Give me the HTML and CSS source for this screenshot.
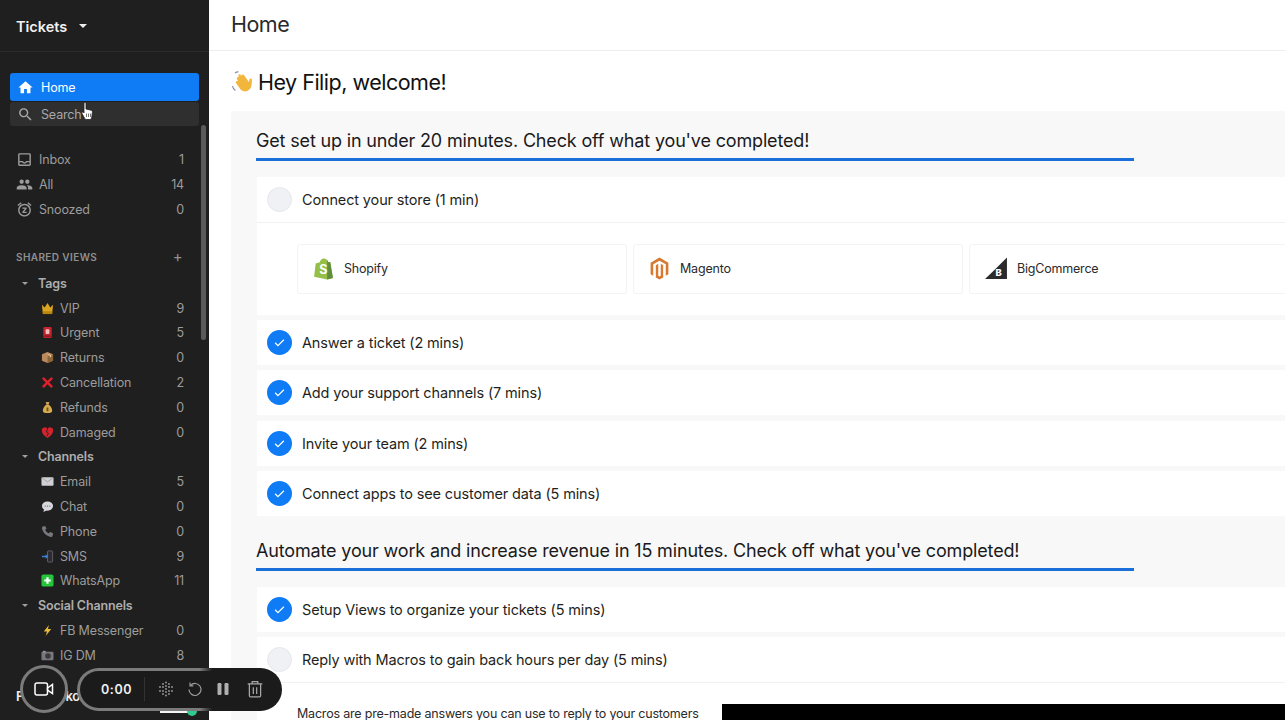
FILE: index.html
```html
<!DOCTYPE html>
<html lang="en">
<head>
    <meta charset="UTF-8">
    <title>Tickets - Home</title>
    <link rel="stylesheet" href="styles.css">
</head>
<body>
    <!-- Icon sprites -->
    <svg class="sprites" width="0" height="0">
        <symbol id="i-home" viewBox="0 0 24 24"><path d="M10 20v-6h4v6h5v-8h3L12 3 2 12h3v8z"/></symbol>
        <symbol id="i-search" viewBox="0 0 24 24"><path d="M15.5 14h-.79l-.28-.27C15.41 12.59 16 11.11 16 9.5 16 5.91 13.09 3 9.5 3S3 5.91 3 9.5 5.91 16 9.5 16c1.61 0 3.09-.59 4.23-1.57l.27.28v.79l5 4.99L20.49 19l-4.99-5zm-6 0C7.01 14 5 11.99 5 9.5S7.01 5 9.5 5 14 7.01 14 9.5 11.99 14 9.5 14z"/></symbol>
        <symbol id="i-inbox" viewBox="0 0 24 24"><path d="M19 3H5c-1.1 0-2 .9-2 2v14c0 1.1.9 2 2 2h14c1.1 0 2-.9 2-2V5c0-1.1-.9-2-2-2zm0 16H5v-3h3.56c.69 1.19 1.97 2 3.45 2s2.75-.81 3.45-2H19v3zm0-5h-4.99c0 1.1-.9 2-2 2s-2-.9-2-2H5V5h14v9z"/></symbol>
        <symbol id="i-people" viewBox="0 0 24 24"><path d="M16 11c1.66 0 2.99-1.34 2.99-3S17.66 5 16 5c-1.66 0-3 1.34-3 3s1.34 3 3 3zm-8 0c1.66 0 2.99-1.34 2.99-3S9.66 5 8 5C6.34 5 5 6.34 5 8s1.34 3 3 3zm0 2c-2.33 0-7 1.17-7 3.5V19h14v-2.5c0-2.33-4.67-3.5-7-3.5zm8 0c-.29 0-.62.02-.97.05 1.16.84 1.97 1.97 1.97 3.45V19h6v-2.5c0-2.33-4.67-3.5-7-3.5z"/></symbol>
        <symbol id="i-snooze" viewBox="0 0 24 24"><path d="M9 11h3.63L9 15.2V17h6v-2h-3.63L15 10.8V9H9v2zm7.056-7.654l1.282-1.535 4.607 3.85-1.28 1.54zM3.336 7.19l-1.28-1.54 4.61-3.85 1.28 1.54zM12 6c3.86 0 7 3.14 7 7s-3.14 7-7 7-7-3.14-7-7 3.14-7 7-7m0-2c-4.97 0-9 4.03-9 9s4.03 9 9 9 9-4.03 9-9-4.03-9-9-9z"/></symbol>
        <symbol id="i-check" viewBox="0 0 24 24"><path d="M5 12.500l4.500 4.500L19 7.500" fill="none" stroke="#fff" stroke-width="2"/></symbol>
    </svg>

    <div class="app">
        <!-- Sidebar -->
        <aside class="sidebar">
            <div class="side-head">
                <span>Tickets</span>
                <i class="caret-big"></i>
            </div>

            <div class="side-scroll">
                <div class="side-nav">
                    <div class="nav-item nav-active"><svg class="ico"><use href="#i-home"/></svg>Home</div>
                    <div class="nav-item nav-search"><svg class="ico"><use href="#i-search"/></svg>Search</div>
                </div>

                <div class="views">
                    <div class="row"><svg class="ico"><use href="#i-inbox"/></svg><span class="name">Inbox</span><span class="num">1</span></div>
                    <div class="row"><svg class="ico"><use href="#i-people"/></svg><span class="name">All</span><span class="num">14</span></div>
                    <div class="row"><svg class="ico"><use href="#i-snooze"/></svg><span class="name">Snoozed</span><span class="num">0</span></div>
                </div>

                <div class="shared-title"><span>SHARED VIEWS</span><span class="plus">+</span></div>

                <div class="group"><i class="caret"></i>Tags</div>
                <div class="row sub">
                    <svg class="emo" viewBox="0 0 14 14"><path d="M1 3l3 3 3-5 3 5 3-3-1 10H2z" fill="#d9a520"/><path d="M2 10h10v3H2z" fill="#b8860b"/></svg>
                    <span class="name">VIP</span><span class="num">9</span>
                </div>
                <div class="row sub">
                    <svg class="emo" viewBox="0 0 14 14"><rect x="2.5" y="1" width="9" height="12" rx="1.5" fill="#c8242f"/><rect x="5" y="3.5" width="4" height="5" rx="1" fill="#f3c0c0"/><rect x="3.5" y="10" width="7" height="2" fill="#8f1a22"/></svg>
                    <span class="name">Urgent</span><span class="num">5</span>
                </div>
                <div class="row sub">
                    <svg class="emo" viewBox="0 0 14 14"><path d="M7 1l6 2.5v7L7 13l-6-2.5v-7z" fill="#b98a5e"/><path d="M7 6v7l6-2.5v-7z" fill="#8c6239"/><path d="M5 2l6 2.5v2L9.5 7V5z" fill="#e2c49c"/></svg>
                    <span class="name">Returns</span><span class="num">0</span>
                </div>
                <div class="row sub">
                    <svg class="emo" viewBox="0 0 14 14"><path d="M2 2l10 10M12 2L2 12" stroke="#e0212b" stroke-width="2.6" fill="none"/></svg>
                    <span class="name">Cancellation</span><span class="num">2</span>
                </div>
                <div class="row sub">
                    <svg class="emo" viewBox="0 0 14 14"><path d="M5 1h4L8.2 4h-2.4z" fill="#c9a25a"/><path d="M5.5 4h3C11 6 12 8.5 12 10.5 12 12.5 10.5 13 7 13s-5-.5-5-2.500C2 8.500 3 6 5.500 4z" fill="#d8ab4c"/><rect x="6" y="7" width="2" height="4" fill="#6d5320"/></svg>
                    <span class="name">Refunds</span><span class="num">0</span>
                </div>
                <div class="row sub">
                    <svg class="emo" viewBox="0 0 14 14"><path d="M7 13C3 10 1 8 1 5a3 3 0 0 1 6-1 3 3 0 0 1 6 1c0 3-2 5-6 8z" fill="#d3232f"/><path d="M7 3.500L5.800 6.500 8 8 6.300 11" stroke="#1f1f1f" stroke-width=".9" fill="none"/></svg>
                    <span class="name">Damaged</span><span class="num">0</span>
                </div>

                <div class="group"><i class="caret"></i>Channels</div>
                <div class="row sub">
                    <svg class="emo" viewBox="0 0 14 14"><rect x="0.500" y="2.500" width="13" height="9" rx="1" fill="#cfcfd4"/><path d="M1 3l6 4.500L13 3" stroke="#8d8d92" stroke-width=".7" fill="none"/></svg>
                    <span class="name">Email</span><span class="num">5</span>
                </div>
                <div class="row sub">
                    <svg class="emo" viewBox="0 0 14 14"><ellipse cx="7" cy="6.500" rx="6" ry="5" fill="#d8d8dc"/><path d="M3.500 10l-1 3 4-2z" fill="#d8d8dc"/><circle cx="4.500" cy="6.500" r=".7" fill="#666"/><circle cx="7" cy="6.500" r=".7" fill="#666"/><circle cx="9.500" cy="6.500" r=".7" fill="#666"/></svg>
                    <span class="name">Chat</span><span class="num">0</span>
                </div>
                <div class="row sub">
                    <svg class="emo" viewBox="0 0 14 14"><path d="M2 1.500l2.500-.5 1.500 3-1.500 1.200c.6 1.700 2 3.100 3.800 3.800L10 7.500l3 1.500-.5 2.500c-.3 1-1 1.500-2 1.300C5.700 12 2 8.300 1 3.500c-.1-.9.300-1.600 1-2z" fill="#77777c"/></svg>
                    <span class="name">Phone</span><span class="num">0</span>
                </div>
                <div class="row sub">
                    <svg class="emo" viewBox="0 0 14 14"><rect x="7" y="1" width="5.500" height="12" rx="1" fill="#2b2b30" stroke="#8a8a90" stroke-width=".6"/><path d="M1 7h6" stroke="#3f7fd6" stroke-width="1.600"/><path d="M5 4.500L8 7l-3 2.500z" fill="#3f7fd6"/></svg>
                    <span class="name">SMS</span><span class="num">9</span>
                </div>
                <div class="row sub">
                    <svg class="emo" viewBox="0 0 14 14"><rect x="0.500" y="0.500" width="13" height="13" rx="2" fill="#25c53a"/><path d="M7 3.500v7M3.500 7h7" stroke="#fff" stroke-width="2.400"/></svg>
                    <span class="name">WhatsApp</span><span class="num">11</span>
                </div>

                <div class="group"><i class="caret"></i>Social Channels</div>
                <div class="row sub">
                    <svg class="emo" viewBox="0 0 14 14"><path d="M8.500 1L3 8h3.500L5 13l6-7.500H7.500z" fill="#e9b93a"/></svg>
                    <span class="name">FB Messenger</span><span class="num">0</span>
                </div>
                <div class="row sub">
                    <svg class="emo" viewBox="0 0 14 14"><rect x="0.500" y="3" width="13" height="9" rx="1" fill="#77777c"/><rect x="2" y="2" width="3" height="1.500" fill="#9a9a9f"/><circle cx="7.500" cy="7.500" r="3" fill="#3a3a3e"/></svg>
                    <span class="name">IG DM</span><span class="num">8</span>
                </div>
            </div>

            <div class="side-foot">
                <span class="user">Filip Markov</span>
                <i class="toggle"></i>
                <i class="status"></i>
            </div>

            <div class="side-bar"></div>
        </aside>

        <!-- Main content -->
        <main class="main">
            <header class="main-head">Home</header>

            <h1 class="welcome">
                <svg class="wave" viewBox="0 0 24 24">
                    <path d="M6 9c-1-1.500 1-2.700 2-1.500L7.500 6c-.8-1.500 1.300-2.500 2.200-1.200l1 1.500c-.5-1.500 1.500-2.500 2.400-1l4.800 6.700.5-2.500c.3-1.500 2.500-1.300 2.500.3 0 4-.2 7-2 9.200-2.800 3.300-7 3-9.500.3L5 13c-1-1.300.6-2.800 2-1.700z" fill="#f2b63c"/>
                    <path d="M1.500 16c.3 2 1.300 3.500 3 4.500M4 3c1-.8 2.200-1.200 3.500-1" stroke="#8a8ab0" stroke-width="1.200" fill="none"/>
                </svg>
                Hey Filip, welcome!
            </h1>

            <section class="panel">
                <h2 class="panel-title">Get set up in under 20 minutes. Check off what you've completed!</h2>

                <div class="card">
                    <div class="task task-open"><i class="circle"></i>Connect your store (1 min)</div>
                    <div class="stores">
                        <div class="store">
                            <svg class="logo" viewBox="0 0 20 22"><path d="M13 2.500L11 1.500C9 1 7 2.500 6.500 5L2.500 6.300 1 19l12.500 2.500L19 20 16.500 5l-2-.2z" fill="#95bf47"/><path d="M13.500 21.500L19 20 16.500 5l-2-.2-1-2.300z" fill="#5e8e3e"/><text x="6" y="16" class="logo-s">S</text></svg>
                            Shopify
                        </div>
                        <div class="store">
                            <svg class="logo" viewBox="0 0 20 22"><path d="M10 .500L1.500 5.500v11l2.500 1.500V7l6-3.500L16 7v11l2.500-1.500v-11z" fill="#d9782f"/><path d="M8.800 6.500L6.500 8v11.500L10 21.500l3.500-2V8l-2.300-1.500V18L10 18.700 8.800 18z" fill="#d9782f"/></svg>
                            Magento
                        </div>
                        <div class="store">
                            <svg class="logo logo-wide" viewBox="0 0 22 22"><path d="M21 .500V21H0L9 12.500z" fill="#2b2b2f"/><text x="10" y="18" class="logo-b">B</text></svg>
                            BigCommerce
                        </div>
                    </div>
                </div>

                <div class="task task-done"><i class="circle on"><svg><use href="#i-check"/></svg></i>Answer a ticket (2 mins)</div>
                <div class="task task-done"><i class="circle on"><svg><use href="#i-check"/></svg></i>Add your support channels (7 mins)</div>
                <div class="task task-done"><i class="circle on"><svg><use href="#i-check"/></svg></i>Invite your team (2 mins)</div>
                <div class="task task-done"><i class="circle on"><svg><use href="#i-check"/></svg></i>Connect apps to see customer data (5 mins)</div>

                <h2 class="panel-title second">Automate your work and increase revenue in 15 minutes. Check off what you've completed!</h2>

                <div class="task task-done"><i class="circle on"><svg><use href="#i-check"/></svg></i>Setup Views to organize your tickets (5 mins)</div>
                <div class="card">
                    <div class="task task-open"><i class="circle"></i>Reply with Macros to gain back hours per day (5 mins)</div>
                    <div class="macros">
                        <p>Macros are pre-made answers you can use to reply to your customers</p>
                        <div class="video"></div>
                    </div>
                </div>
            </section>
        </main>
    </div>

    <!-- Mouse pointer in the recording -->
    <svg class="pointer" viewBox="0 0 12 18">
        <path d="M3 1.500c0-1.300 2-1.300 2 0V7l5 1.200c1 .3 1.500 1 1.400 2L10.800 15c-.2 1-.8 2.500-2 2.500H5.500c-.8 0-1.400-.4-1.800-1L1 11.500c-.7-1.200.8-2.200 1.600-1.200L3 11z" fill="#fff" stroke="#222" stroke-width=".8"/>
        <path d="M5.500 11.500v3.500M7.500 11.500v3.500M9.500 11.500v3.500" stroke="#555" stroke-width=".8"/>
    </svg>

    <!-- Screen recorder toolbar -->
    <div class="rec">
        <div class="rec-cam">
            <svg width="20" height="16" viewBox="0 0 20 16"><rect x="1" y="2" width="12.500" height="12" rx="2" fill="none" stroke="#fff" stroke-width="1.500"/><path d="M13.500 7L18.500 3.500v9L13.500 9z" fill="none" stroke="#fff" stroke-width="1.500"/></svg>
        </div>
        <div class="rec-pill">
            <span class="rec-time">0:00</span>
            <i class="rec-sep"></i>
            <svg class="rec-ico" viewBox="0 0 16 16" fill="#9c9c9c">
                <circle cx="2" cy="6" r=".9"/><circle cx="2" cy="10" r=".9"/><circle cx="5" cy="3" r=".9"/><circle cx="5" cy="6" r=".9"/><circle cx="5" cy="10" r=".9"/><circle cx="5" cy="13" r=".9"/><circle cx="8" cy="1.500" r=".9"/><circle cx="8" cy="5" r=".9"/><circle cx="8" cy="8" r=".9"/><circle cx="8" cy="11" r=".9"/><circle cx="8" cy="14.500" r=".9"/><circle cx="11" cy="3" r=".9"/><circle cx="11" cy="6" r=".9"/><circle cx="11" cy="10" r=".9"/><circle cx="11" cy="13" r=".9"/><circle cx="14" cy="6" r=".9"/><circle cx="14" cy="10" r=".9"/>
            </svg>
            <svg class="rec-ico" viewBox="0 0 16 16" fill="none" stroke="#9c9c9c" stroke-width="1.200"><path d="M3.500 4.500A6 6 0 1 1 2 8.500"/><path d="M3 1.500v3.300h3.300"/></svg>
            <svg class="rec-ico" viewBox="0 0 16 16" fill="#b0b0b0"><rect x="2.500" y="2" width="4" height="12" rx="1.200"/><rect x="9.500" y="2" width="4" height="12" rx="1.200"/></svg>
            <svg class="rec-ico rec-trash" viewBox="0 0 16 16" fill="none" stroke="#a8a8a8" stroke-width="1.100"><path d="M1.500 3.500h13M5.500 3.500V1.500h5v2M3 3.500v10.500c0 .6.400 1 1 1h8c.6 0 1-.4 1-1V3.500M6.500 6.500v6M9.500 6.500v6"/></svg>
        </div>
    </div>
</body>
</html>
```

FILE: styles.css
```css
* {
    box-sizing: border-box;
}

html, body {
    margin: 0;
    height: 720px;
    overflow: hidden;
}

body {
    font-family: Inter, "Liberation Sans", sans-serif;
    background: #fff;
    color: #1c1c1e;
}

.sprites {
    position: absolute;
}

.app {
    display: flex;
    height: 720px;
}

/* Sidebar */
.sidebar {
    position: relative;
    flex: 0 0 209px;
    display: flex;
    flex-direction: column;
    background: #1f1f1f;
    color: #9c9c9c;
    font-size: 12.5px;
    letter-spacing: -.15px;
}

.side-head {
    flex: 0 0 52px;
    display: flex;
    align-items: center;
    gap: 12px;
    padding: 1px 16px 0;
    border-bottom: 1px solid #2a2a2a;
    color: #f2f2f2;
    font-size: 14.5px;
    font-weight: 600;
    letter-spacing: 0;
}

.caret-big {
    width: 0;
    height: 0;
    border-left: 4.5px solid transparent;
    border-right: 4.5px solid transparent;
    border-top: 4.5px solid #eee;
}

.side-scroll {
    flex: 1;
    min-height: 0;
    overflow: hidden;
}

.side-nav {
    padding: 21px 10px 0;
}

.nav-item {
    display: flex;
    align-items: center;
    gap: 7.5px;
    padding-left: 6.5px;
    border-radius: 3px;
}

.nav-active {
    height: 28px;
    background: #0f7bf5;
    color: #fff;
}

.nav-search {
    height: 24px;
    margin-top: 1px;
    background: #2f2f2f;
    color: #a8a8a8;
}

.ico {
    width: 17px;
    height: 17px;
    fill: currentColor;
    flex: none;
}

.views {
    margin-top: 21.2px;
}

.row {
    display: flex;
    align-items: center;
    height: 24.8px;
    padding: 0 25px 0 16px;
}

.row .ico {
    margin-right: 6px;
}

.name {
    flex: 1;
}

.row.sub {
    padding-left: 41px;
}

.emo {
    flex: none;
    width: 13px;
    height: 13px;
    margin-right: 6px;
}

.shared-title {
    display: flex;
    justify-content: space-between;
    align-items: center;
    height: 24.8px;
    margin-top: 22.6px;
    margin-bottom: 2px;
    padding: 0 26px 0 16px;
    color: #8f8f8f;
    font-size: 10px;
    font-weight: 600;
    letter-spacing: .4px;
}

.plus {
    font-size: 15px;
    font-weight: 400;
}

.group {
    display: flex;
    align-items: center;
    height: 24.8px;
    padding-left: 22px;
    color: #adadad;
    font-size: 12.5px;
    font-weight: 600;
    letter-spacing: -.15px;
}

.caret {
    width: 0;
    height: 0;
    margin-right: 10px;
    border-left: 3px solid transparent;
    border-right: 3px solid transparent;
    border-top: 3px solid #a0a0a0;
}

.side-foot {
    position: relative;
    flex: 0 0 52px;
    padding: 20px 16px 0;
    background: #1f1f1f;
    color: #eee;
    font-size: 13px;
    font-weight: 600;
    letter-spacing: -.5px;
}

.toggle {
    position: absolute;
    left: 160px;
    top: 42px;
    width: 28px;
    height: 3px;
    background: #f4f4f4;
}

.status {
    position: absolute;
    left: 187px;
    top: 38px;
    width: 10px;
    height: 10px;
    border-radius: 50%;
    background: #2ecc8f;
}

.side-bar {
    position: absolute;
    left: 201px;
    top: 125px;
    width: 5px;
    height: 215px;
    border-radius: 3px;
    background: #5a5a5a;
}

/* Main area */
.main {
    flex: 1;
    min-width: 0;
    overflow: hidden;
}

.main-head {
    height: 51px;
    padding: 11px 22px 0;
    border-bottom: 1px solid #ededed;
    font-size: 21.5px;
    letter-spacing: -.5px;
    color: #2a2a2c;
}

.welcome {
    display: flex;
    align-items: center;
    gap: 3px;
    height: 60px;
    margin: 0;
    padding: 1px 0 0 22px;
    font-size: 21.5px;
    font-weight: 400;
    letter-spacing: -.5px;
    color: #111;
}

.wave {
    width: 24px;
    height: 24px;
}

.panel {
    width: 1400px;
    margin-left: 22px;
    padding: 15px 0 0 25px;
    background: #f8f8f8;
}

.panel-title {
    width: 878px;
    height: 35px;
    margin: 0 0 16px;
    border-bottom: 3px solid #1a6fd8;
    font-size: 18px;
    font-weight: 400;
    line-height: 30px;
    letter-spacing: -.16px;
    color: #1a1a1c;
}

.panel-title.second {
    margin-top: 19.5px;
}

.card {
    margin-left: 1px;
    margin-bottom: 5px;
    background: #fff;
}

.task {
    display: flex;
    align-items: center;
    gap: 10px;
    height: 45px;
    margin-left: 1px;
    padding-left: 10px;
    background: #fff;
    font-size: 14.5px;
    letter-spacing: -.14px;
    color: #1f1f21;
}

.task-done {
    margin-bottom: 5.4px;
}

.task-open {
    height: 46px;
    margin-left: 0;
    border-bottom: 1px solid #f1f1f1;
}

.circle {
    flex: none;
    width: 25px;
    height: 25px;
    border-radius: 50%;
    background: #f0f1f4;
    border: 1px solid #e6e7ea;
}

.circle.on {
    background: #0f7bf5;
    border: none;
}

.circle svg {
    display: block;
    width: 25px;
    height: 25px;
    padding: 5px;
}

.stores {
    display: flex;
    gap: 6px;
    padding: 21px 0 21px 40px;
}

.store {
    flex: 0 0 330px;
    display: flex;
    align-items: center;
    gap: 10px;
    height: 50px;
    padding: 0 0 1px 15px;
    border: 1px solid #f3f3f3;
    border-radius: 3px;
    font-size: 12.5px;
    letter-spacing: -.2px;
    color: #2a2a2c;
}

.logo {
    width: 21px;
    height: 23px;
}

.logo-wide {
    width: 23px;
    margin-right: -1px;
}

.logo-s {
    fill: #fff;
    font-size: 12px;
    font-weight: 700;
}

.logo-b {
    fill: #fff;
    font-size: 9px;
    font-weight: 800;
}

.macros {
    display: flex;
    gap: 23px;
    padding: 21px 0 0 40px;
    height: 100px;
}

.macros p {
    width: 402px;
    margin: 3px 0 0;
    font-size: 12.5px;
    line-height: 14px;
    letter-spacing: -.2px;
    white-space: nowrap;
    color: #2a2a2c;
}

.video {
    width: 600px;
    height: 100px;
    background: #000;
}

/* Recorder overlay */
.pointer {
    position: absolute;
    left: 81px;
    top: 102px;
    width: 12px;
    height: 18px;
}

.rec {
    position: absolute;
    left: 20px;
    top: 665px;
    display: flex;
    align-items: center;
    gap: 9px;
}

.rec-cam {
    display: flex;
    align-items: center;
    justify-content: center;
    width: 48px;
    height: 48px;
    border: 3px solid #7b7b7b;
    border-radius: 50%;
    background: #1f1f1f;
}

.rec-pill {
    display: flex;
    align-items: center;
    width: 205px;
    height: 43px;
    padding-left: 21px;
    border: 3px solid transparent;
    border-radius: 22px;
    background: linear-gradient(#1b1b1c, #1b1b1c) padding-box,
        linear-gradient(90deg, #7b7b7b 60%, #1b1b1c 66%) border-box;
}

.rec-time {
    width: 30px;
    color: #f0f0f0;
    font-size: 12.5px;
    font-weight: 600;
    letter-spacing: .6px;
}

.rec-sep {
    width: 1px;
    height: 24px;
    margin: 0 13px 0 13px;
    background: #333;
}

.rec-ico {
    flex: none;
    width: 16px;
    height: 16px;
    margin-right: 12.5px;
}

.rec-trash {
    width: 18px;
    height: 18px;
    margin-left: 2px;
}
```
